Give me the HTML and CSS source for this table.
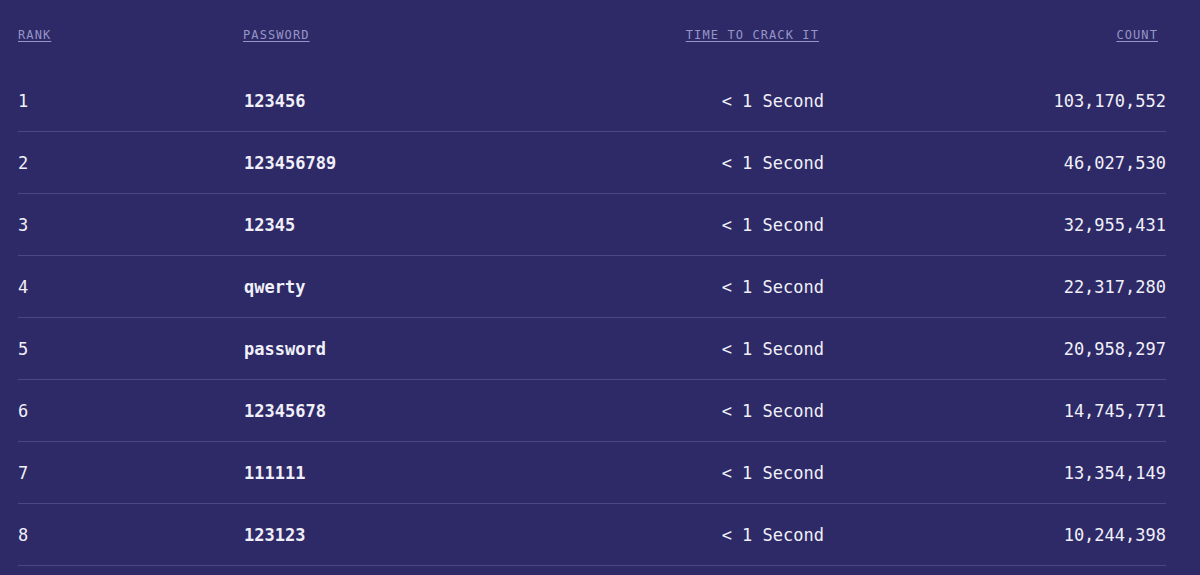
FILE: index.html
```html
<!DOCTYPE html>
<html lang="en">
<head>
  <meta charset="UTF-8" />
  <meta name="viewport" content="width=device-width, initial-scale=1.0"/>
  <title>Most common passwords</title>
  <link rel="stylesheet" href="styles.css">
</head>
<body>
  <div class="board">
    <div class="row head">
      <span class="rank"><u>Rank</u></span>
      <span class="pwd"><u>Password</u></span>
      <span class="time"><u>Time to crack it</u></span>
      <span class="count"><u>Count</u></span>
    </div>
    <div class="row">
      <span class="rank">1</span>
      <span class="pwd">123456</span>
      <span class="time">&lt; 1 Second</span>
      <span class="count">103,170,552</span>
    </div>
    <div class="row">
      <span class="rank">2</span>
      <span class="pwd">123456789</span>
      <span class="time">&lt; 1 Second</span>
      <span class="count">46,027,530</span>
    </div>
    <div class="row">
      <span class="rank">3</span>
      <span class="pwd">12345</span>
      <span class="time">&lt; 1 Second</span>
      <span class="count">32,955,431</span>
    </div>
    <div class="row">
      <span class="rank">4</span>
      <span class="pwd">qwerty</span>
      <span class="time">&lt; 1 Second</span>
      <span class="count">22,317,280</span>
    </div>
    <div class="row">
      <span class="rank">5</span>
      <span class="pwd">password</span>
      <span class="time">&lt; 1 Second</span>
      <span class="count">20,958,297</span>
    </div>
    <div class="row">
      <span class="rank">6</span>
      <span class="pwd">12345678</span>
      <span class="time">&lt; 1 Second</span>
      <span class="count">14,745,771</span>
    </div>
    <div class="row">
      <span class="rank">7</span>
      <span class="pwd">111111</span>
      <span class="time">&lt; 1 Second</span>
      <span class="count">13,354,149</span>
    </div>
    <div class="row">
      <span class="rank">8</span>
      <span class="pwd">123123</span>
      <span class="time">&lt; 1 Second</span>
      <span class="count">10,244,398</span>
    </div>
  </div>
</body>
</html>
```

FILE: styles.css
```css
html, body {
  margin: 0;
  background-color: #2d2a67;
  height: 100%;
  overflow: hidden;
}
body {
  padding: 0 34px 0 18px;
  font-family: "DejaVu Sans Mono", "Liberation Mono", monospace;
  color: #f1f0f8;
}
.row {
  display: grid;
  grid-template-columns: 225px 357px 224px 1fr;
  align-items: center;
  height: 61px;
  border-bottom: 1px solid #4a4786;
  font-size: 17px;
}
.row .time, .row .count {
  text-align: right;
}
.pwd {
  font-weight: bold;
  padding-left: 1px;
}
.head {
  height: 70px;
  border-bottom: none;
  font-size: 12px;
  letter-spacing: 1.1px;
  text-transform: uppercase;
  color: #9795c6;
}
.head u {
  text-decoration-color: #9795c6;
  text-underline-offset: 2px;
}
.head .pwd {
  font-weight: normal;
  padding-left: 0;
}
.head .time {
  padding-right: 5px;
}
.head .count {
  padding-right: 8px;
}
```
